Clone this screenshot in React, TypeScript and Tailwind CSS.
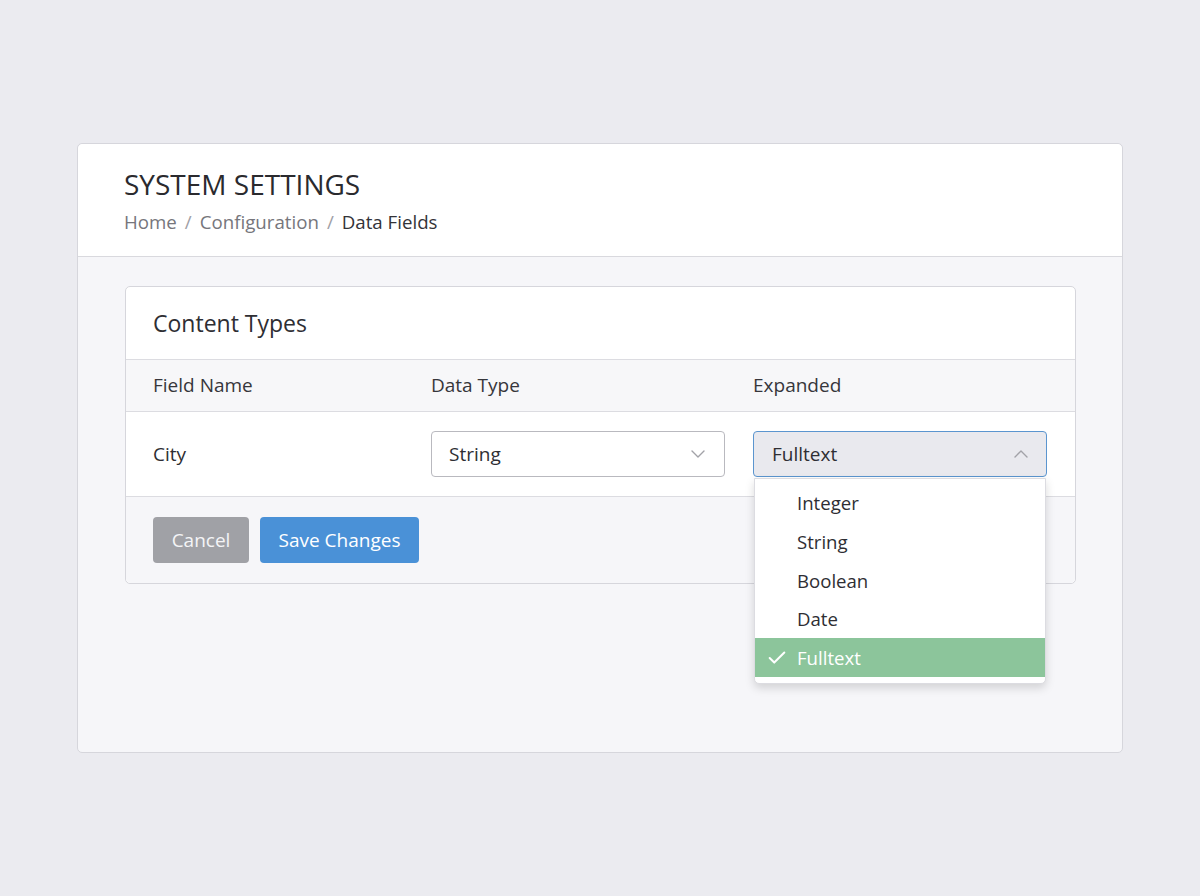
import { Check, ChevronDown, ChevronUp } from "lucide-react";

const options = ["Integer", "String", "Boolean", "Date", "Fulltext"];

const App = () => {
  return (
    <div
      className="min-h-[896px] w-full bg-[#ebebf0] pt-[143px] pl-[77px]"
      style={{ fontFamily: '"Open Sans", "Noto Sans", sans-serif' }}
    >
      <div className="w-[1046px] h-[610px] rounded-[5px] border border-[#d6d6dc] bg-[#f6f6f9] overflow-visible">
        <div className="h-[113px] bg-white rounded-t-[5px] border-b border-[#d9d9de] px-[46px] pt-[22px]">
          <h1 className="text-[28px] leading-[36px] text-[#2a2a2e]">SYSTEM SETTINGS</h1>
          <div className="mt-[7px] flex items-center text-[18.7px] leading-[26px] text-[#76767c]">
            <span>Home</span>
            <span className="mx-[8px] text-[#a0a0a6]">/</span>
            <span>Configuration</span>
            <span className="mx-[8px] text-[#a0a0a6]">/</span>
            <span className="text-[#333338]">Data Fields</span>
          </div>
        </div>

        <div className="px-[47px] pt-[29px]">
          <div className="w-[951px] rounded-[5px] border border-[#d6d6dc] bg-white">
            <div className="h-[73px] flex items-center px-[27px] border-b border-[#dcdce1]">
              <h2 className="text-[23px] text-[#2e2e33]">Content Types</h2>
            </div>
            <div className="h-[52px] flex items-center bg-[#f7f7f9] border-b border-[#dcdce1] px-[27px] text-[19px] text-[#36363b]">
              <div className="w-[278px]">Field Name</div>
              <div className="w-[322px]">Data Type</div>
              <div>Expanded</div>
            </div>
            <div className="h-[85px] flex items-center px-[27px] border-b border-[#dcdce1] text-[19px] text-[#2e2e33]">
              <div className="w-[278px]">City</div>
              <div className="w-[322px]">
                <div className="w-[294px] h-[46px] rounded-[4px] border border-[#b9b9bf] bg-white flex items-center justify-between pl-[17px] pr-[14px]">
                  <span>String</span>
                  <ChevronDown className="w-[24px] h-[24px] text-[#a2a2a8]" strokeWidth={1.4} />
                </div>
              </div>
              <div className="relative">
                <div className="w-[294px] h-[46px] rounded-[4px] border border-[#5b95cf] bg-[#e9e9ee] flex items-center justify-between pl-[18px] pr-[13px]">
                  <span>Fulltext</span>
                  <ChevronUp className="w-[24px] h-[24px] text-[#a2a2a8]" strokeWidth={1.4} />
                </div>
                <div className="absolute left-[1px] top-[47px] w-[292px] rounded-b-[5px] bg-white border border-[#dcdce1] shadow-[0_4px_10px_rgba(0,0,0,0.15)] pt-[5px] pb-[6px] z-10 text-[18.6px]">
                  {options.map((o) => (
                    <div
                      key={o}
                      className={
                        o === "Fulltext"
                          ? "h-[38.6px] flex items-center bg-[#8cc59b] text-white"
                          : "h-[38.6px] flex items-center text-[#2e2e33]"
                      }
                    >
                      <div className="w-[42px] flex items-center pl-[11px]">
                        {o === "Fulltext" && <Check className="w-[22px] h-[22px] text-white" strokeWidth={2.2} />}
                      </div>
                      <span>{o}</span>
                    </div>
                  ))}
                </div>
              </div>
            </div>
            <div className="h-[86px] flex items-center gap-[11px] px-[27px] bg-[#f6f6f9] rounded-b-[5px] text-[19px]">
              <button className="h-[46px] w-[96px] rounded-[4px] bg-[#a0a1a6] text-[#f4f4f6]">Cancel</button>
              <button className="h-[46px] w-[159px] rounded-[4px] bg-[#4a91d7] text-white">Save Changes</button>
            </div>
          </div>
        </div>
      </div>
    </div>
  );
};

export default App;
